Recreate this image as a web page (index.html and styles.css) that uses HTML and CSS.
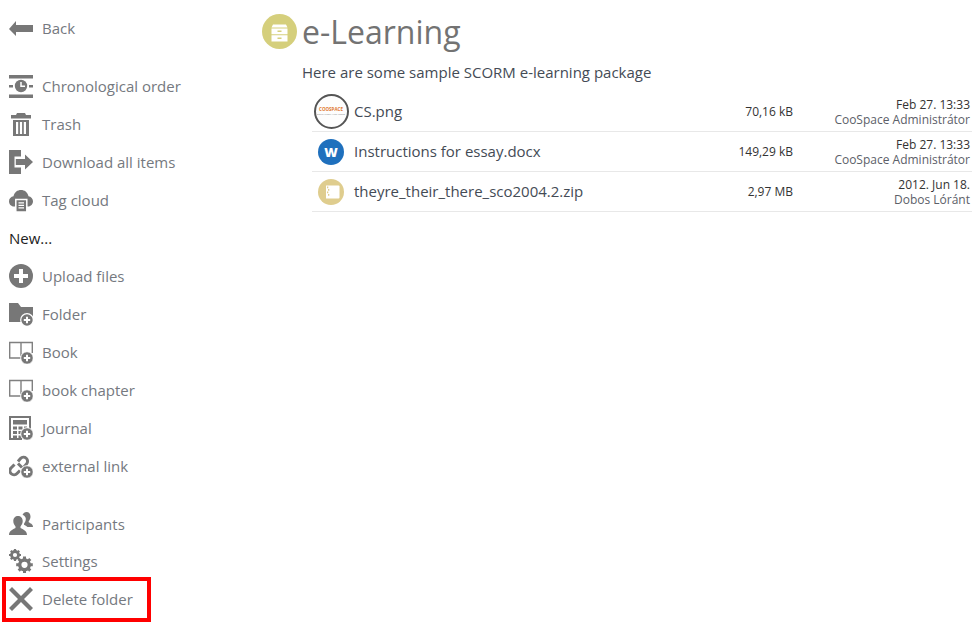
FILE: index.html
```html
<!DOCTYPE html>
<html lang="en">
<head>
<meta charset="utf-8">
<title>e-Learning</title>
<link rel="stylesheet" href="styles.css">
</head>
<body>
<div class="page">
  <nav class="sidebar">
    <div class="group">
      <a class="item"><svg class="icon" viewBox="0 0 24 24"><path d="M0 13 7 5v4h17v7H7v4z"/></svg>Back</a>
    </div>
    <div class="group">
      <a class="item"><svg class="icon" viewBox="0 0 24 24"><path d="M0 1h24v3.500H0zM0 20.500h24V24H0zM0 11h4v2.500H0zM20 11h4v2.500h-4z"/><circle cx="12" cy="12" r="6.200"/><path d="M12 8v4.300h4" fill="none" stroke="#fff" stroke-width="1.500"/></svg>Chronological order</a>
      <a class="item"><svg class="icon" viewBox="0 0 24 24"><path d="M2 3h5l1-2h8l1 2h5v3.500H2zM4 8h16v16H4zM7 10v12h2.200V10zM10.900 10v12h2.200V10zM14.800 10v12H17V10z" fill-rule="evenodd"/></svg>Trash</a>
      <a class="item"><svg class="icon" viewBox="0 0 24 24"><path d="M0 0h12v6.500H5.500v11H12V24H0zM6.800 9H16V4.500l8 7.500-8 7.500V15H6.800z"/></svg>Download all items</a>
      <a class="item"><svg class="icon" viewBox="0 0 24 24"><path d="M5 18.500C2 18.500 0 16 0 13.200S2 8.700 4.500 8.200C5.500 4 8.500 2 12 2s6.500 2 7.500 6.200C22 8.700 24 10.500 24 13.200S22 18.500 19 18.500z"/><path d="M6.800 11.500h11V24h-11z" stroke="#fff" stroke-width="1.500"/><path d="M9.500 14.800h5.500M9.500 17.300h5.500M9.500 19.800h5.500" stroke="#fff" stroke-width="1.200"/></svg>Tag cloud</a>
      <div class="item heading">New...</div>
      <a class="item"><svg class="icon" viewBox="0 0 24 24"><circle cx="12" cy="12" r="12"/><path d="M10 5h4v5h5v4h-5v5h-4v-5H5v-4h5z" fill="#fff"/></svg>Upload files</a>
      <a class="item"><svg class="icon" viewBox="0 0 24 24"><path d="M0 1h9l3 4h12v15H0z"/><circle cx="18" cy="18" r="6.300" stroke="#fff" stroke-width="1.200"/><path d="M14.800 18h6.400M18 14.800v6.400" stroke="#fff" stroke-width="2"/></svg>Folder</a>
      <a class="item"><svg class="icon" viewBox="0 0 24 24"><path d="M12 2.500H.7V18H12M12 2.500h11.300V13M12 2.500V16" fill="none" stroke="#808080" stroke-width="1.400"/><circle cx="18" cy="18" r="6.300" stroke="#fff"/><path d="M14.800 18h6.400M18 14.800v6.400" stroke="#fff" stroke-width="2"/></svg>Book</a>
      <a class="item"><svg class="icon" viewBox="0 0 24 24"><path d="M12 2.500H.7V18H12M12 2.500h11.300V13M12 2.500V16" fill="none" stroke="#808080" stroke-width="1.400"/><circle cx="18" cy="18" r="6.300" stroke="#fff"/><path d="M14.800 18h6.400M18 14.800v6.400" stroke="#fff" stroke-width="2"/></svg>book chapter</a>
      <a class="item"><svg class="icon" viewBox="0 0 24 24"><path d="M0 0h22v13h-2V2H2v20h11v2H0z"/><path d="M4 4h14v4.500H4zM4 10.500h4v3H4zM9.500 10.500h4v3h-4zM15 10.500h3v1.500h-3zM4 15h4v3H4zM9.500 15h3v3h-3zM4 19.500h4v2.500H4zM9.500 19.500h3v2.500h-3z"/><circle cx="18" cy="18" r="6.300" stroke="#fff"/><path d="M14.800 18h6.400M18 14.800v6.400" stroke="#fff" stroke-width="2"/></svg>Journal</a>
      <a class="item"><svg class="icon" viewBox="0 0 24 24"><g fill="none" stroke="#777" stroke-width="3"><path d="M9 7.500 11.500 4.500a4 4 0 0 1 6 5.500L15 13"/><path d="M9 9.500l4 4"/><path d="M11 16.500 8 19.500a4 4 0 0 1-6-5.500L5.500 10.500"/></g><circle cx="18" cy="18" r="6.300" stroke="#fff"/><path d="M14.800 18h6.400M18 14.800v6.400" stroke="#fff" stroke-width="2"/></svg>external link</a>
    </div>
    <div class="group">
      <a class="item short"><svg class="icon" viewBox="0 0 24 24"><path d="M0 23c0-4.500 4-5.500 6.500-7v-1.500C5 12.500 4.300 11 4.300 9 4.300 6 6.300 4 9 4s4.700 2 4.700 5c0 2-.7 3.500-2.200 5.500V16c2.500 1.500 6.500 2.500 6.500 7z"/><path d="M13.500 3c.8-1.800 2.200-3 4-3 2.500 0 4 2 4 4.500 0 2-.7 3.300-1.800 4.800v1c1.500 1 4.300 1.700 4.300 4.700h-5.500c-1-.8-2.300-1.500-3.500-2.200v-1c1-1.500 1.800-3 1.800-5 0-1.500-1-2.800-2.800-3.800z"/></svg>Participants</a>
      <a class="item"><svg class="icon" viewBox="0 0 24 24"><g fill="none" stroke="#777"><circle cx="6" cy="6" r="3.500" stroke-width="2.800"/><path d="M6 0v2.500M6 9.500V12M0 6h2.500M9.500 6H12M1.800 1.800l1.700 1.700M8.500 8.500l1.700 1.700M10.200 1.800 8.500 3.500M3.500 8.500l-1.700 1.700" stroke-width="2.200"/><circle cx="15.500" cy="15.800" r="4.800" stroke-width="3.400"/><path d="M15.500 7.500V11M15.500 20.500V24M7.200 15.800h3.500M20.300 15.800h3.500M9.700 10l2.300 2.300M19 19.300l2.300 2.300M21.300 10 19 12.300M12 19.300l-2.300 2.300" stroke-width="3"/></g></svg>Settings</a>
      <a class="item marked"><svg class="icon" viewBox="0 0 24 24"><path d="M3 0l9 9 9-9 3 3-9 9 9 9-3 3-9-9-9 9-3-3 9-9-9-9z"/></svg>Delete folder</a>
    </div>
  </nav>
  <main class="main">
    <header class="title">
      <svg class="title-icon" viewBox="0 0 35 35"><circle cx="17.500" cy="17.500" r="17.500" fill="#d5cf7c"/><path d="M11 10.500h13l1.500 3h-16zM9.500 14.500h16v5.800h-16zM9.500 21.300h16V27.500h-16z" fill="#fff"/><path d="M15.500 16.500h4v1.500h-4zM15.500 23.500h4V25h-4z" fill="#d5cf7c"/></svg>
      <h1>e-Learning</h1>
    </header>
    <p class="desc">Here are some sample SCORM e-learning package</p>
    <div class="files">
      <div class="row">
        <div class="thumb">
          <div class="logo"><span class="logo-main">COOSPACE</span><span class="logo-sub">EDUCATION AND MORE</span></div>
        </div>
        <div class="name">CS.png</div>
        <div class="size">70,16 kB</div>
        <div class="meta"><div>Feb 27. 13:33</div><div class="owner">CooSpace Administrátor</div></div>
      </div>
      <div class="row">
        <div class="thumb"><span class="badge word">W</span></div>
        <div class="name">Instructions for essay.docx</div>
        <div class="size">149,29 kB</div>
        <div class="meta"><div>Feb 27. 13:33</div><div class="owner">CooSpace Administrátor</div></div>
      </div>
      <div class="row">
        <div class="thumb">
          <svg class="zip" viewBox="0 0 26 26"><circle cx="13" cy="13" r="13" fill="#dfcd8e"/><path d="M8 6.500h12.500a1 1 0 0 1 1 1v11a1 1 0 0 1-1 1H8z" fill="#fff"/><path d="M9 7.500h1.300v1.700H9zM10 10h1.300v1.700H10zM9 12.500h1.300v1.700H9zM10 15h1.300v1.700H10z" fill="#dfcd8e"/></svg>
        </div>
        <div class="name">theyre_their_there_sco2004.2.zip</div>
        <div class="size">2,97 MB</div>
        <div class="meta"><div>2012. Jun 18.</div><div class="owner">Dobos Lóránt</div></div>
      </div>
    </div>
  </main>
</div>
</body>
</html>
```
FILE: styles.css
```css
html, body {
  margin: 0;
  padding: 0;
  background: #fff;
}
body {
  font-family: "Open Sans", "Liberation Sans", sans-serif;
  color: #444b55;
  overflow: hidden;
}
.page {
  display: flex;
  height: 624px;
}
.sidebar {
  width: 262px;
  flex: none;
  padding: 9px 0 0 9px;
  box-sizing: border-box;
  display: flex;
  flex-direction: column;
  gap: 20px;
}
.item {
  position: relative;
  display: flex;
  align-items: center;
  gap: 9px;
  height: 38px;
  font-size: 15px;
  color: #757980;
  fill: #777;
}
.item.short {
  height: 37px;
}
.heading {
  color: #222;
}
.icon {
  width: 24px;
  height: 24px;
  flex: none;
  color: #777;
}
.marked::after {
  content: "";
  position: absolute;
  left: -7px;
  top: -3px;
  width: 141px;
  height: 37px;
  border: 4px solid #f00;
}
.main {
  flex: 1;
  min-width: 0;
  padding-top: 14px;
}
.title {
  display: flex;
  align-items: center;
  gap: 5px;
  height: 34px;
}
.title-icon {
  width: 35px;
  height: 35px;
  flex: none;
}
h1 {
  margin: 0;
  font-size: 32px;
  font-weight: 400;
  line-height: 35px;
  color: #737373;
}
.desc {
  margin: 13px 0 0 40px;
  font-size: 15px;
  line-height: 22px;
  color: #444b55;
}
.files {
  margin: 9px 1px 0 50px;
}
.row {
  display: grid;
  grid-template-columns: 42px 1fr 120px 179px;
  align-items: center;
  height: 39px;
  border-bottom: 1px solid #e8e8e8;
}
.thumb {
  display: flex;
  justify-content: center;
  padding-right: 4px;
}
.logo {
  width: 31px;
  height: 31px;
  border: 2px solid #555;
  border-radius: 50%;
  display: flex;
  flex-direction: column;
  align-items: center;
  justify-content: center;
  overflow: hidden;
  background: #fdfdfd;
}
.logo-main {
  font-size: 4.500px;
  line-height: 5px;
  font-weight: 700;
  color: #e0762c;
}
.logo-sub {
  font-size: 2.500px;
  line-height: 4px;
  color: #888;
  white-space: nowrap;
}
.badge {
  width: 26px;
  height: 26px;
  border-radius: 50%;
  display: flex;
  align-items: center;
  justify-content: center;
  font-size: 13px;
  font-weight: 800;
}
.word {
  background: #1f70bd;
  color: #fff;
}
.zip {
  width: 26px;
  height: 26px;
}
.name {
  font-size: 15px;
  line-height: 20px;
  padding-bottom: 2px;
  color: #444b55;
  white-space: nowrap;
}
.size {
  font-size: 12px;
  text-align: right;
  color: #333;
}
.meta {
  font-size: 12px;
  line-height: 15px;
  text-align: right;
  padding-right: 2px;
  color: #333;
}
.owner {
  color: #5c6068;
}
```
